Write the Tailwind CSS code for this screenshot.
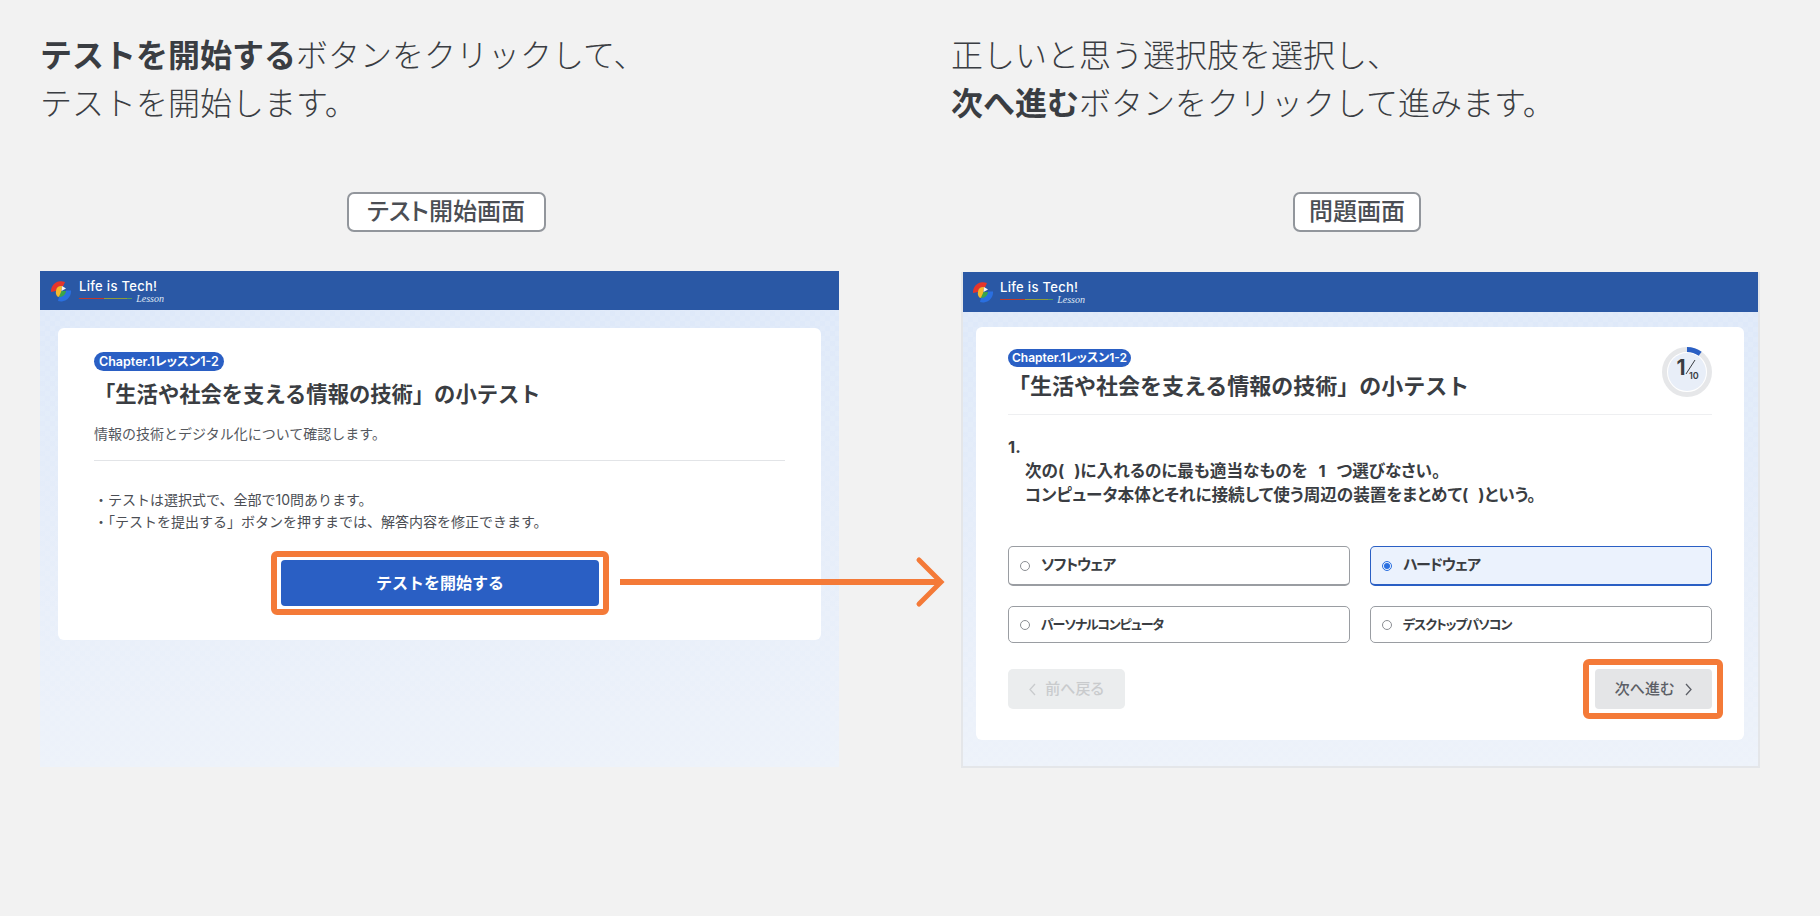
<!DOCTYPE html>
<html lang="ja">
<head>
  <meta charset="UTF-8" />
  <meta name="viewport" content="width=device-width, initial-scale=1.0" />
  <title>テストの進め方</title>
  <script src="https://cdn.jsdelivr.net/npm/@tailwindcss/browser@4"></script>
</head>
<body class="bg-[#f2f2f2] text-[#3a3d42] font-['Inter','Noto_Sans_CJK_JP',sans-serif]">
  <div class="relative h-[916px] overflow-hidden pt-[32px] pl-[40px] flex">

    <!-- Left: start screen -->
    <div class="w-[799px] flex flex-col">
      <p class="text-[32px] leading-[48px] font-light"><b class="font-bold">テストを開始する</b>ボタンをクリックして、<br>テストを開始します。</p>
      <div class="mt-[64px] h-[40px] flex justify-center pl-[13px]">
        <span class="h-[40px] w-[199px] flex items-center justify-center bg-white border-2 border-[#92969c] rounded-[7px] text-[24px] font-medium text-[#4b4e54] [font-feature-settings:'palt']">テスト開始画面</span>
      </div>

      <div class="mt-[39px] h-[496px] bg-[image:repeating-conic-gradient(#ffffff14_0_25%,transparent_0_50%),linear-gradient(#dde8f9,#edf2fa)] bg-size-[10px_10px,100%_100%] flex flex-col">
        <!-- Header -->
        <div class="h-[39px] shrink-0 bg-[#2a58a5] flex items-center pl-[10px] gap-[7px]">
          <svg width="22" height="22" viewBox="0 0 22 22">
            <path d="M1 12 A10 10 0 0 1 15 2 L13 6.5 A5 5 0 0 0 6 11 Z" fill="#e5352b"/>
            <path d="M6 11 A5 5 0 0 1 12 6 L11.5 11 L13 15 L8 17 A6 6 0 0 1 6 11 Z" fill="#f7b92b"/>
            <path d="M12 6 L16 8.5 L11.5 11 Z" fill="#f4f4f4"/>
            <path d="M11.5 11 L16 11 A5 5 0 0 1 9 16.5 Z" fill="#3ba54a"/>
            <path d="M21 10.5 A10 10 0 0 1 8 21 L9 16.8 A6 6 0 0 0 16 10.5 Z" fill="#2a6fe0"/>
          </svg>
          <div class="w-[85px] flex flex-col text-white">
            <span class="text-[13px] leading-[15px] font-medium tracking-[0.3px] whitespace-nowrap">Life is Tech!</span>
            <div class="flex items-center h-[9px]">
              <span class="w-[25px] h-px bg-[#c0392b]"></span>
              <span class="w-[24px] h-px bg-[#8f9a3a]"></span>
              <span class="w-[5px] h-px bg-[#4f9a5a]"></span>
              <span class="ml-[4px] text-[10px] leading-[9px] italic font-['Liberation_Serif',serif] text-[#dfe6f3]">Lesson</span>
            </div>
          </div>
        </div>
        <!-- Card -->
        <div class="mt-[18px] mx-[18px] h-[312px] bg-white rounded-[6px] px-[36px] pt-[24px]">
          <span class="block w-fit h-[19px] px-[5px] rounded-full bg-[#2a5fc4] text-white text-[12.5px] leading-[19px] font-semibold [font-feature-settings:'palt']">Chapter.1レッスン1-2</span>
          <h2 class="mt-[9px] text-[21.3px] leading-[28px] font-bold text-[#3a3d42]">「生活や社会を支える情報の技術」の小テスト</h2>
          <p class="mt-[14px] text-[14px] leading-[24px] text-[#55585e]">情報の技術とデジタル化について確認します。</p>
          <div class="mt-[14px] border-t border-[#e2e4e7]"></div>
          <div class="mt-[28px] text-[14px] leading-[22px] text-[#4b4e54]">
            <p>・テストは選択式で、全部で10問あります。</p>
            <p>・「テストを提出する」ボタンを押すまでは、解答内容を修正できます。</p>
          </div>
          <div class="mt-[18px] ml-[177px] w-[338px] h-[64px] border-[6px] border-[#f47a38] rounded-[6px] bg-white p-[3px_4px]">
            <button class="w-full h-[46px] bg-[#2a5fc4] rounded-[4px] text-white text-[16px] font-bold">テストを開始する</button>
          </div>
        </div>
      </div>
    </div>

    <!-- Right: question screen -->
    <div class="ml-[112px] w-[809px] flex flex-col">
      <p class="text-[32px] leading-[48px] font-light">正しいと思う選択肢を選択し、<br><b class="font-bold">次へ進む</b>ボタンをクリックして進みます。</p>
      <div class="mt-[64px] h-[40px] flex justify-center pr-[6px] w-[818px]">
        <span class="h-[40px] w-[128px] flex items-center justify-center bg-white border-2 border-[#92969c] rounded-[7px] text-[24px] font-medium text-[#4b4e54] [font-feature-settings:'palt']">問題画面</span>
      </div>

      <div class="mt-[40px] ml-[10px] w-[799px] h-[496px] border-2 border-t-0 border-[#e4e6e9] bg-[image:repeating-conic-gradient(#ffffff14_0_25%,transparent_0_50%),linear-gradient(#dde8f9,#edf2fa)] bg-size-[10px_10px,100%_100%] flex flex-col">
        <div class="h-[40px] shrink-0 bg-[#2a58a5] flex items-center pl-[9px] gap-[6px]">
          <svg width="22" height="22" viewBox="0 0 22 22">
            <path d="M1 12 A10 10 0 0 1 15 2 L13 6.5 A5 5 0 0 0 6 11 Z" fill="#e5352b"/>
            <path d="M6 11 A5 5 0 0 1 12 6 L11.5 11 L13 15 L8 17 A6 6 0 0 1 6 11 Z" fill="#f7b92b"/>
            <path d="M12 6 L16 8.5 L11.5 11 Z" fill="#f4f4f4"/>
            <path d="M11.5 11 L16 11 A5 5 0 0 1 9 16.5 Z" fill="#3ba54a"/>
            <path d="M21 10.5 A10 10 0 0 1 8 21 L9 16.8 A6 6 0 0 0 16 10.5 Z" fill="#2a6fe0"/>
          </svg>
          <div class="w-[85px] flex flex-col text-white">
            <span class="text-[13px] leading-[15px] font-medium tracking-[0.3px] whitespace-nowrap">Life is Tech!</span>
            <div class="flex items-center h-[9px]">
              <span class="w-[25px] h-px bg-[#c0392b]"></span>
              <span class="w-[24px] h-px bg-[#8f9a3a]"></span>
              <span class="w-[5px] h-px bg-[#4f9a5a]"></span>
              <span class="ml-[4px] text-[10px] leading-[9px] italic font-['Liberation_Serif',serif] text-[#dfe6f3]">Lesson</span>
            </div>
          </div>
        </div>
        <div class="mt-[15px] ml-[13px] mr-[14px] h-[413px] bg-white rounded-[6px] px-[32px] pt-[22px]">
          <div class="relative h-[66px] border-b border-[#eeeff1]">
            <span class="block w-fit h-[18px] px-[4px] rounded-full bg-[#2a5fc4] text-white text-[12px] leading-[18px] font-semibold [font-feature-settings:'palt']">Chapter.1レッスン1-2</span>
            <h2 class="mt-[4px] text-[22px] leading-[30px] font-bold">「生活や社会を支える情報の技術」の小テスト</h2>
            <svg class="absolute right-0 top-[-2px]" width="50" height="50" viewBox="0 0 50 50">
              <circle cx="25" cy="25" r="19" fill="#e8eef8"/>
              <circle cx="25" cy="25" r="22.5" fill="none" stroke="#e6e7e9" stroke-width="5"/>
              <path d="M25 2.5 A22.5 22.5 0 0 1 38.2 6.8" fill="none" stroke="#2a5fc4" stroke-width="5"/>
              <text x="14.5" y="28" font-size="21" font-weight="700" fill="#3a3d42">1</text>
              <path d="M33 13 L24 27" stroke="#3a3d42" stroke-width="1"/>
              <text x="27" y="32" font-size="9" font-weight="600" fill="#3a3d42">10</text>
            </svg>
          </div>
          <div class="mt-[20px] text-[16.6px] leading-[24px] font-bold [font-feature-settings:'palt']">
            <p>1.</p>
            <p class="pl-[17px]">次の(<span class="px-[3px]"> </span>)に入れるのに最も適当なものを<span class="px-[7px]">&nbsp;1&nbsp;</span>つ選びなさい。</p>
            <p class="pl-[17px]">コンピュータ本体とそれに接続して使う周辺の装置をまとめて(<span class="px-[3px]"> </span>)という。</p>
          </div>
          <div class="mt-[39px] grid grid-cols-2 gap-x-[20px] gap-y-[20px] font-semibold [font-feature-settings:'palt']">
            <div class="h-[40px] flex items-center border border-[#9a9da2] border-b-2 rounded-[5px] pl-[11px] gap-[11px] text-[15px] tracking-[-1.1px]">
              <span class="size-[10px] rounded-full border border-[#8b8e93]"></span>ソフトウェア
            </div>
            <div class="h-[40px] flex items-center border border-[#2a5fc4] border-b-2 rounded-[5px] bg-[#ebf2fd] pl-[11px] gap-[11px] text-[15px] tracking-[-1.1px]">
              <span class="size-[10px] rounded-full border border-[#2a6fe0] flex items-center justify-center"><span class="size-[6px] rounded-full bg-[#2a6fe0]"></span></span>ハードウェア
            </div>
            <div class="h-[37px] flex items-center border border-[#9a9da2] rounded-[5px] pl-[11px] gap-[11px] text-[13px] tracking-[-1.1px]">
              <span class="size-[10px] rounded-full border border-[#8b8e93]"></span>パーソナルコンピュータ
            </div>
            <div class="h-[37px] flex items-center border border-[#9a9da2] rounded-[5px] pl-[11px] gap-[11px] text-[13px] tracking-[-1.1px]">
              <span class="size-[10px] rounded-full border border-[#8b8e93]"></span>デスクトップパソコン
            </div>
          </div>
          <div class="mt-[16px] flex justify-between items-center">
            <button class="w-[117px] h-[40px] bg-[#ebedee] rounded-[5px] flex items-center justify-center gap-[9px] text-[15px] font-medium text-[#c9cbcd] [font-feature-settings:'palt']">
              <svg width="7" height="13" viewBox="0 0 7 13"><path d="M6 1 L1 6.5 L6 12" fill="none" stroke="#c9cbcd" stroke-width="1.3"/></svg>前へ戻る
            </button>
            <div class="mr-[-11px] border-[6px] border-[#f47a38] rounded-[6px] bg-white p-[4px_5px_4px_6px]">
              <button class="w-[117px] h-[40px] bg-[#e4e5e7] rounded-[4px] flex items-center justify-center gap-[11px] text-[15px] font-medium text-[#5c5f66] [font-feature-settings:'palt']">次へ進む<svg width="7" height="13" viewBox="0 0 7 13"><path d="M1 1 L6 6.5 L1 12" fill="none" stroke="#5c5f66" stroke-width="1.3"/></svg></button>
            </div>
          </div>
        </div>
      </div>
    </div>

    <!-- Arrow between the two screens -->
    <svg class="absolute left-[620px] top-[556px]" width="330" height="52" viewBox="0 0 330 52">
      <path d="M0 26 H321" stroke="#f47a38" stroke-width="6"/>
      <path d="M299 4 L321 26 L299 48" fill="none" stroke="#f47a38" stroke-width="5" stroke-linecap="round"/>
    </svg>
  </div>
</body>
</html>
